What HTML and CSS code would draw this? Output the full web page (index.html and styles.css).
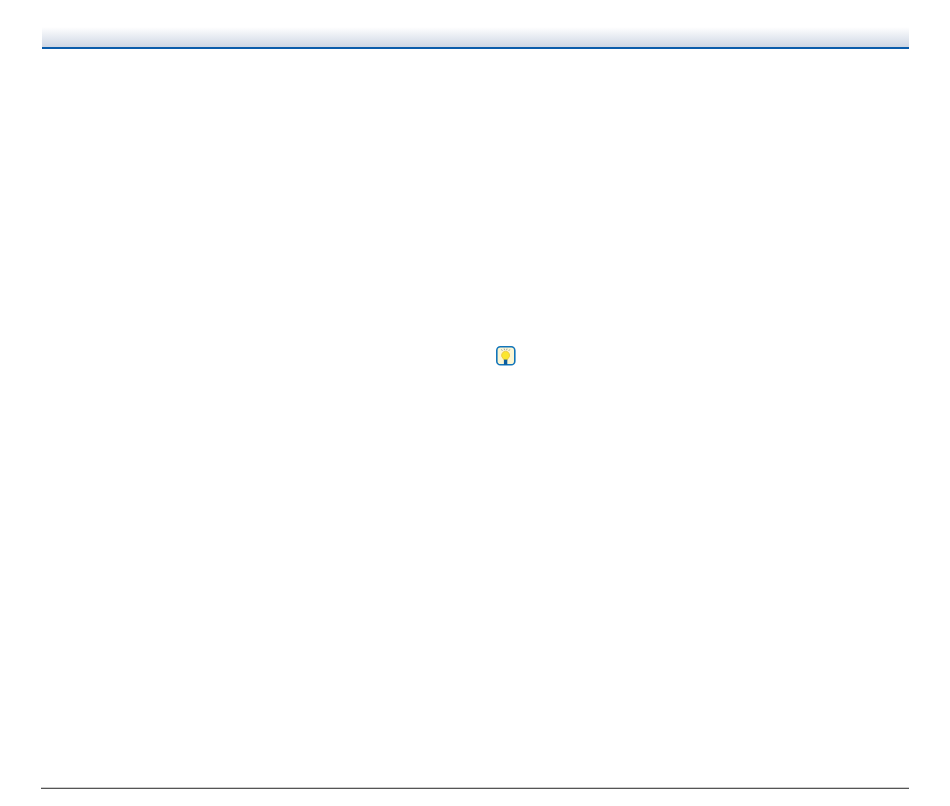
FILE: index.html
```html
<!DOCTYPE html>
<html lang="en">
<head>
<meta charset="utf-8">
<title>Page</title>
<link rel="stylesheet" href="styles.css">
</head>
<body>
<div class="page">
  <header class="top-bar"></header>
  <main class="content">
    <svg class="hint-icon" width="20" height="20" viewBox="0 0 20 20" aria-hidden="true">
      <rect x="0.8" y="0.8" width="18" height="18" rx="3.6" fill="#fdf6d2" stroke="#1275ba" stroke-width="1.6"/>
      <path d="M9.6 5.2a4.1 4.1 0 0 0-2.6 7.2c.6.6.9 1.1 1 1.8h3.2c.1-.7.4-1.2 1-1.8a4.1 4.1 0 0 0-2.6-7.2z" fill="#fbe62f" stroke="#e8bf35" stroke-width=".7"/>
      <rect x="7.9" y="13.6" width="3.4" height="5" fill="#0b5c9e"/>
      <path d="M5.4 3.4l1 1.4M8.2 2.6l.4 1.6M11 2.6l-.4 1.6M13.8 3.4l-1 1.4" stroke="#8d989f" stroke-width=".9" fill="none"/>
    </svg>
  </main>
  <footer class="bottom-rule"></footer>
</div>
</body>
</html>
```
FILE: styles.css
```css
html, body {
  margin: 0;
  padding: 0;
  background: #fff;
}
.page {
  box-sizing: border-box;
  height: 806px;
  padding: 27px 41px 17px 41px;
  display: flex;
  flex-direction: column;
}
.top-bar {
  height: 20px;
  flex: none;
  margin-left: 1px;
  background: linear-gradient(to bottom, #ffffff, #cdd6e4);
  border-bottom: 2px solid #0a5cab;
}
.content {
  flex: 1;
  display: flex;
  align-items: flex-start;
  padding: 297px 0 0 455px;
}
.hint-icon {
  display: block;
}
.bottom-rule {
  flex: none;
  height: 1px;
  background: #555;
  box-shadow: 0 -1px 0 #ccc;
}
```
